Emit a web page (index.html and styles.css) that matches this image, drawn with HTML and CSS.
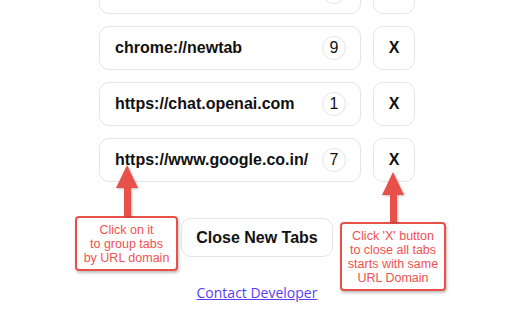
FILE: index.html
```html
<!DOCTYPE html>
<html lang="en">
<head>
    <meta charset="UTF-8">
    <title>Tab Grouper</title>
    <link rel="stylesheet" href="styles.css">
</head>
<body>
    <div class="container">
        <ul class="groups">
            <li class="group">
                <div class="domain"><span class="name">chrome://extensions</span><span class="count">3</span></div>
                <button class="close">X</button>
            </li>
            <li class="group">
                <div class="domain"><span class="name">chrome://newtab</span><span class="count">9</span></div>
                <button class="close">X</button>
            </li>
            <li class="group">
                <div class="domain"><span class="name">https://chat.openai.com</span><span class="count">1</span></div>
                <button class="close">X</button>
            </li>
            <li class="group">
                <div class="domain"><span class="name">https://www.google.co.in/</span><span class="count">7</span></div>
                <button class="close">X</button>
            </li>
        </ul>
        <button class="close-new">Close New Tabs</button>
        <a class="contact" href="#">Contact Developer</a>
    </div>

    <!-- help callouts -->
    <div class="tip tip-left">
        <div class="arrow"></div>
        <div class="note">Click on it<br>to group tabs<br>by URL domain</div>
    </div>
    <div class="tip tip-right">
        <div class="arrow"></div>
        <div class="note">Click 'X' button<br>to close all tabs<br>starts with same<br>URL Domain</div>
    </div>
</body>
</html>
```

FILE: styles.css
```css
body {
    margin: 0;
    background: #fff;
    font-family: "Liberation Sans", Arial, sans-serif;
    overflow: hidden;
    height: 320px;
    position: relative;
}

.container {
    display: flex;
    flex-direction: column;
    align-items: center;
    margin-top: -30px;
}

.groups {
    list-style: none;
    margin: 0;
    padding: 0;
    display: flex;
    flex-direction: column;
    gap: 12px;
    margin-left: 2px;
}

.group {
    display: flex;
    gap: 12px;
}

.domain {
    width: 262px;
    height: 44px;
    box-sizing: border-box;
    border: 1px solid #e4e4e4;
    border-radius: 10px;
    display: flex;
    align-items: center;
    justify-content: space-between;
    padding: 0 14px 0 15px;
}

.name {
    font-weight: bold;
    font-size: 16px;
    color: #111;
}

.count {
    width: 24px;
    height: 24px;
    box-sizing: border-box;
    border: 1px solid #e4e4e4;
    border-radius: 50%;
    display: flex;
    align-items: center;
    justify-content: center;
    font-size: 16px;
    color: #111;
}

.close {
    width: 42px;
    height: 44px;
    border: 1px solid #e4e4e4;
    border-radius: 10px;
    background: #fff;
    font-family: inherit;
    font-weight: bold;
    font-size: 16px;
    color: #111;
    padding: 0;
}

.close-new {
    margin-top: 36px;
    width: 152px;
    height: 39px;
    border: 1px solid #e4e4e4;
    border-radius: 10px;
    background: #fff;
    font-family: inherit;
    font-weight: bold;
    font-size: 16px;
    color: #111;
    margin-left: 2px;
}

.contact {
    margin-top: 26px;
    font-family: "Open Sans", sans-serif;
    font-size: 14px;
    color: #5a3ff0;
    margin-left: 2px;
}

.tip {
    position: absolute;
    display: flex;
    flex-direction: column;
    align-items: center;
}

.tip-left {
    left: 75px;
    top: 165px;
    width: 103px;
}

.tip-right {
    left: 340px;
    top: 172px;
    width: 106px;
}

.arrow {
    width: 22px;
    position: relative;
    filter: drop-shadow(1px 1px 1px rgba(0, 0, 0, 0.25));
}

.tip-left .arrow {
    height: 51px;
}

.tip-right .arrow {
    height: 50px;
}

.arrow::before {
    content: "";
    position: absolute;
    left: 0;
    top: 0;
    border-left: 11px solid transparent;
    border-right: 11px solid transparent;
    border-bottom: 23px solid #e8504a;
}

.arrow::after {
    content: "";
    position: absolute;
    left: 8px;
    top: 22px;
    bottom: 0;
    width: 7px;
    background: #e8504a;
}

.note {
    align-self: stretch;
    border: 2px solid #e8504a;
    border-radius: 4px;
    background: #fff;
    color: #f05252;
    font-size: 12.5px;
    line-height: 14px;
    text-align: center;
    padding: 5px 2px 4px;
    box-shadow: 1px 2px 3px rgba(0, 0, 0, 0.25);
}
```
